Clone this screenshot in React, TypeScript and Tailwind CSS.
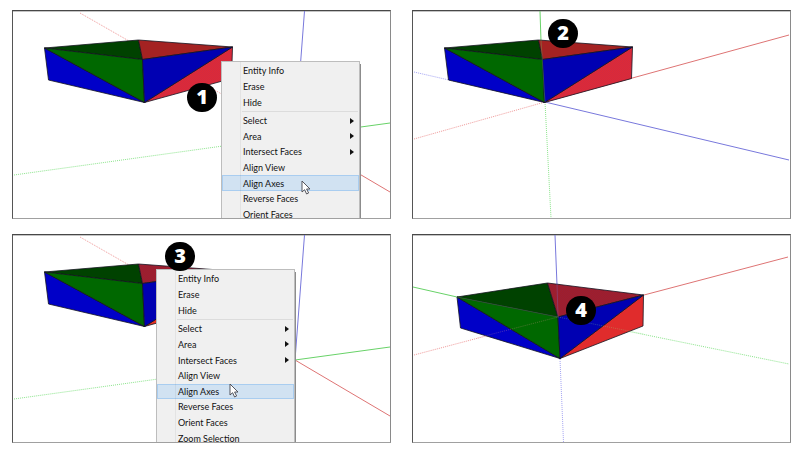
import clsx from 'clsx';

type Point = [number, number];

type BoxShape = {
  left: Point;
  back: Point;
  right: Point;
  center: Point;
  lowerLeft: Point;
  front: Point;
  lowerRight: Point;
};

type Axis = { from: Point; to: Point; color: 'red' | 'green' | 'blue'; dotted?: boolean; faint?: boolean };

const farBox: BoxShape = {
  left: [31.5, 37],
  back: [125.5, 29],
  right: [219.5, 36],
  center: [129.5, 48.5],
  lowerLeft: [35.5, 69],
  front: [131.5, 91.5],
  lowerRight: [218.5, 67.5],
};

const nearBox: BoxShape = {
  left: [44, 62],
  back: [134.5, 48],
  right: [230.5, 60],
  center: [145, 82],
  lowerLeft: [47.5, 93],
  front: [147, 123.5],
  lowerRight: [230, 91],
};

const worldAxes: Axis[] = [
  { from: [67, 2], to: [282, 125], color: 'red', dotted: true },
  { from: [1, 164], to: [282, 125], color: 'green', dotted: true },
  { from: [282, 125], to: [291.5, 0], color: 'blue' },
  { from: [282, 125], to: [377, 112], color: 'green' },
  { from: [282, 125], to: [377, 181], color: 'red' },
];

const frontAxes: Axis[] = [
  { from: [1, 61], to: [132, 91], color: 'blue', dotted: true },
  { from: [1, 128], to: [132, 91], color: 'red', dotted: true },
  { from: [132, 91], to: [138, 207], color: 'green', dotted: true },
  { from: [132, 91], to: [376, 149], color: 'blue' },
  { from: [132, 91], to: [376, 24], color: 'red' },
  { from: [127, 0], to: [128, 30], color: 'green' },
];

const centerAxes: Axis[] = [
  { from: [1, 120], to: [145, 82], color: 'red', dotted: true },
  { from: [147, 124], to: [150.5, 207], color: 'blue', dotted: true },
  { from: [145, 82], to: [376, 129], color: 'green', dotted: true },
  { from: [0, 52], to: [44, 62], color: 'green' },
  { from: [142, 0], to: [144, 50], color: 'blue' },
  { from: [231, 60], to: [375, 22], color: 'red' },
];

const solidStroke = { red: '#de7474', green: '#68d268', blue: '#7878dc' };
const dottedStroke = { red: '#f09a9a', green: '#8ce58c', blue: '#a4a4f4' };

function points(...list: Point[]) {
  return list.map((p) => p.join(',')).join(' ');
}

function AxisLine({ from, to, color, dotted, faint }: Axis) {
  return (
    <line
      x1={from[0]}
      y1={from[1]}
      x2={to[0]}
      y2={to[1]}
      stroke={dotted ? dottedStroke[color] : solidStroke[color]}
      strokeWidth="1"
      strokeDasharray={dotted ? '1 1' : undefined}
      opacity={faint ? 0.3 : 1}
    />
  );
}

type SceneProps = {
  label: string;
  box: BoxShape;
  axes: Axis[];
  overlay?: Axis[];
  topFace: string;
  sideFace: string;
  selected?: 'top' | 'side';
};

function Scene({ label, box, axes, overlay = [], topFace, sideFace, selected }: SceneProps) {
  const { left, back, right, center, lowerLeft, front, lowerRight } = box;
  const selectedFace = selected === 'top' ? points(back, right, center) : points(front, right, lowerRight);

  return (
    <svg viewBox="0 0 377 207" className="block h-auto w-full" role="img" aria-label={label}>
      <defs>
        <pattern id="selection-dots" width="2" height="2" patternUnits="userSpaceOnUse">
          <rect width="1" height="1" fill="#3030c0" />
          <rect x="1" y="1" width="1" height="1" fill="#3030c0" />
        </pattern>
      </defs>
      {axes.map((axis, i) => (
        <AxisLine key={i} {...axis} />
      ))}
      <g stroke="#141420" strokeWidth="0.8" strokeLinejoin="round">
        <polygon points={points(left, back, center)} fill="#004200" />
        <polygon points={points(left, lowerLeft, front)} fill="#0000c8" />
        <polygon points={points(left, center, front)} fill="#006800" />
        <polygon points={points(back, right, center)} fill={topFace} />
        <polygon points={points(front, right, lowerRight)} fill={sideFace} />
        <polygon points={points(center, right, front)} fill="#0000b2" />
      </g>
      {selected && <polygon points={selectedFace} fill="url(#selection-dots)" opacity="0.07" />}
      {overlay.map((axis, i) => (
        <AxisLine key={i} {...axis} />
      ))}
    </svg>
  );
}

function Badge({ step, className }: { step: number; className: string }) {
  return (
    <span
      className={clsx(
        'absolute flex h-[29px] w-[30px] items-center justify-center rounded-full bg-black pb-px text-xl leading-none font-extrabold text-white',
        className,
      )}
    >
      {step}
    </span>
  );
}

function Pointer({ className }: { className: string }) {
  return (
    <svg viewBox="0 0 10 15" className={clsx('absolute h-[15px] w-[10px]', className)} aria-hidden="true">
      <path
        d="M1 1v11l2.6-2.3 2 4.3 2-1-2-4H9z"
        fill="#fff"
        stroke="#44444c"
        strokeWidth="0.9"
        strokeLinejoin="round"
      />
    </svg>
  );
}

function MenuItem({ label }: { label: string }) {
  const active = label === 'Align Axes';
  const hasSubmenu = ['Select', 'Area', 'Intersect Faces'].includes(label);

  return (
    <button
      type="button"
      role="menuitem"
      aria-haspopup={hasSubmenu ? 'menu' : undefined}
      className={clsx(
        'flex min-h-0 flex-1 items-center justify-between border pr-1 pl-5 text-left whitespace-nowrap',
        active ? 'border-[#a9cdf0] bg-[#d1e2f2]' : 'border-transparent',
      )}
    >
      {label}
      {hasSubmenu && (
        <svg viewBox="0 0 4 6" className="h-[6px] w-[4px]" aria-hidden="true">
          <path d="M0 0l4 3-4 3z" fill="#111" />
        </svg>
      )}
    </button>
  );
}

const editItems = ['Entity Info', 'Erase', 'Hide'];
const faceItems = ['Select', 'Area', 'Intersect Faces', 'Align View', 'Align Axes', 'Reverse Faces', 'Orient Faces'];

type ContextMenuProps = {
  items: string[];
  className: string;
  listClassName: string;
};

function ContextMenu({ items, className, listClassName }: ContextMenuProps) {
  return (
    <div
      role="menu"
      aria-label="Face actions"
      className={clsx(
        "absolute w-[139px] border border-[#bdbdbd] bg-[#f0f0f0] pt-px font-['Lato',sans-serif] text-[9px] leading-none text-[#101010] shadow-[1px_3px_0_#8c8c8c]",
        className,
      )}
    >
      <div className="flex h-[47px] flex-col">
        {editItems.map((label) => (
          <MenuItem key={label} label={label} />
        ))}
      </div>
      <div role="separator" className="my-px mr-px ml-5 h-px bg-[#dcdcdc]" />
      <div className={clsx('flex flex-col', listClassName)}>
        {items.map((label) => (
          <MenuItem key={label} label={label} />
        ))}
      </div>
      <div className="absolute inset-y-0 left-[18px] w-px bg-black/5" />
    </div>
  );
}

function Panel({ children }: { children: React.ReactNode }) {
  return (
    <section className="relative overflow-hidden border border-t-[#484848] border-r-[#8a8a8a] border-b-[#a0a0a0] border-l-[#555] bg-white shadow-[inset_0_1px_0_#c4c4c4]">
      {children}
    </section>
  );
}

export default function App() {
  return (
    <main className="grid grid-cols-2 gap-x-[21px] gap-y-[15px] bg-white pt-[10px] pr-[9px] pb-3 pl-3 font-['Open_Sans',sans-serif]">
      <Panel>
        <Scene
          label="Side face selected"
          box={farBox}
          axes={worldAxes}
          topFace="#a42222"
          sideFace="#de2a36"
          selected="side"
        />
        <ContextMenu items={faceItems} className="top-[50px] left-[208px]" listClassName="h-[109px]" />
        <Pointer className="top-[169px] left-[288px]" />
        <Badge step={1} className="top-[72px] left-[174px]" />
      </Panel>
      <Panel>
        <Scene
          label="Axes aligned to the side face"
          box={farBox}
          axes={frontAxes}
          overlay={[{ from: [128, 29], to: [132, 91], color: 'green', faint: true }]}
          topFace="#a42222"
          sideFace="#de2a36"
          selected="side"
        />
        <Badge step={2} className="top-[8px] left-[135px]" />
      </Panel>
      <Panel>
        <Scene
          label="Top face selected"
          box={farBox}
          axes={worldAxes}
          topFace="#a01e2a"
          sideFace="#e83020"
          selected="top"
        />
        <ContextMenu
          items={[...faceItems, 'Zoom Selection']}
          className="top-[34px] left-[143px]"
          listClassName="h-[125px]"
        />
        <Pointer className="top-[148px] left-[216px]" />
        <Badge step={3} className="top-[7px] left-[152px]" />
      </Panel>
      <Panel>
        <Scene
          label="Axes aligned to the top face"
          box={nearBox}
          axes={centerAxes}
          overlay={[
            { from: [44, 62], to: [145, 82], color: 'green', faint: true },
            { from: [144, 48], to: [145, 82], color: 'blue', faint: true },
            { from: [64, 103], to: [145, 82], color: 'red', dotted: true, faint: true },
            { from: [145, 82], to: [231, 99], color: 'green', dotted: true, faint: true },
          ]}
          topFace="#a01e2a"
          sideFace="#e02c2c"
          selected="top"
        />
        <Badge step={4} className="top-[61px] left-[153px]" />
      </Panel>
    </main>
  );
}
